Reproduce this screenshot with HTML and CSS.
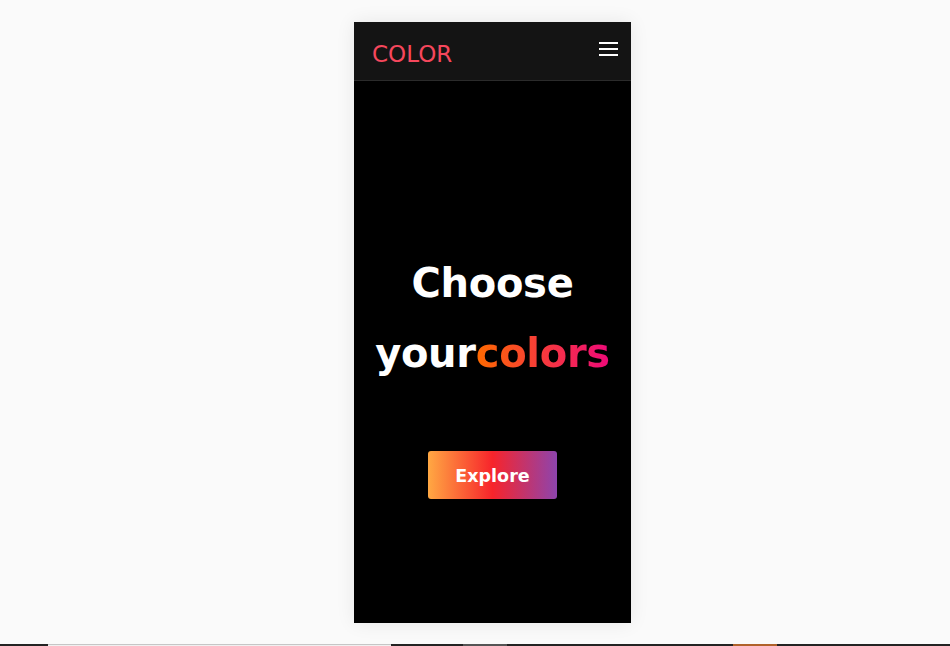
FILE: index.html
```html
<!DOCTYPE html>
<html lang="en">
<head>
<meta charset="utf-8">
<title>Color</title>
<link rel="stylesheet" href="styles.css">
</head>
<body>
<div class="phone">
  <header class="topbar">
    <span class="logo">COLOR</span>
    <button class="menu" aria-label="Menu">
      <svg width="19" height="16" viewBox="0 0 19 16"><rect x="0" y="1" width="19" height="2" fill="#fff"/><rect x="0" y="7" width="19" height="2" fill="#fff"/><rect x="0" y="13" width="19" height="2" fill="#fff"/></svg>
    </button>
  </header>
  <main class="hero">
    <h1 class="title">Choose<br>your<span class="grad">colors</span></h1>
    <a class="btn" href="#">Explore</a>
  </main>
</div>
<div class="taskbar">
  <span class="seg dark w48"></span>
  <span class="seg light w343"></span>
  <span class="seg dark w72"></span>
  <span class="seg gray w44"></span>
  <span class="seg dark w226"></span>
  <span class="seg orange w44"></span>
  <span class="seg dark grow"></span>
</div>
</body>
</html>
```

FILE: styles.css
```css
html, body {
  margin: 0;
  padding: 0;
  background: #fafafa;
  height: 100%;
  overflow: hidden;
}
body {
  font-family: "DejaVu Sans", "Liberation Sans", sans-serif;
}
.phone {
  width: 277px;
  height: 601px;
  margin: 22px 0 0 354px;
  background: #000;
  box-shadow: 0 0 18px rgba(0,0,0,0.08);
  display: flex;
  flex-direction: column;
}
.topbar {
  height: 58px;
  background: #141414;
  border-bottom: 1px solid #2b2b2b;
  display: flex;
  align-items: center;
  justify-content: space-between;
  padding: 0 13px 0 18px;
}
.logo {
  color: #f6475c;
  font-size: 23px;
  line-height: 1;
  margin-top: 6px;
}
.menu {
  background: none;
  border: 0;
  padding: 0;
  width: 19px;
  height: 16px;
  margin-top: -4px;
  display: block;
}
.menu svg { display: block; }
.hero {
  flex: 1;
  display: flex;
  flex-direction: column;
  align-items: center;
  padding-top: 167px;
}
.title {
  margin: 0;
  color: #fff;
  font-size: 40px;
  line-height: 70px;
  font-weight: bold;
  text-align: center;
  letter-spacing: -0.3px;
}
.grad {
  background: linear-gradient(to right, #ff6a00, #ee0979);
  -webkit-background-clip: text;
  background-clip: text;
  color: transparent;
}
.btn {
  margin-top: 63px;
  width: 129px;
  height: 48px;
  border-radius: 3px;
  background: linear-gradient(to right, #ffa843, #f7242b 50%, #8e44ad);
  color: #fff;
  font-size: 17.5px;
  font-weight: bold;
  text-decoration: none;
  display: flex;
  align-items: center;
  justify-content: center;
  padding-top: 1px;
  box-sizing: border-box;
}
.taskbar {
  position: fixed;
  left: 0;
  right: 0;
  bottom: 0;
  height: 2px;
  display: flex;
}
.seg { height: 2px; display: block; }
.dark { background: #232323; }
.light { background: #f0f0f0; border-top: 1px solid #c6c6c6; box-sizing: border-box; }
.gray { background: #555; }
.orange { background: #b0622a; }
.w48 { width: 48px; }
.w343 { width: 343px; }
.w72 { width: 72px; }
.w44 { width: 44px; }
.w226 { width: 226px; }
.grow { flex: 1; }
```
